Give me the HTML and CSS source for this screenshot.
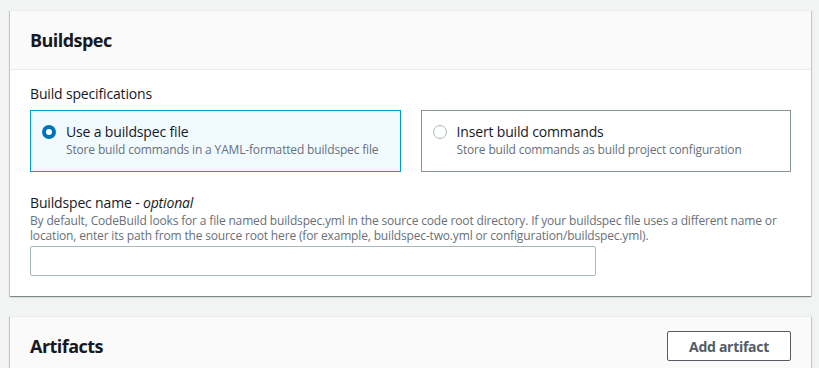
FILE: index.html
```html
<!DOCTYPE html>
<html>

	<head>
		<meta charset="UTF-8">
		<title>Buildspec</title>
		<link rel="stylesheet" href="styles.css">
	</head>

	<body>
		<div class="page">
			<div class="card">
				<div class="card-head">
					<h2>Buildspec</h2>
				</div>
				<div class="card-body">
					<div class="label">Build specifications</div>
					<div class="tiles">
						<label class="tile checked">
							<span class="radio"></span>
							<span class="tile-text">
								<span class="tile-title">Use a buildspec file</span>
								<span class="tile-desc">Store build commands in a YAML-formatted buildspec file</span>
							</span>
						</label>
						<label class="tile">
							<span class="radio"></span>
							<span class="tile-text">
								<span class="tile-title">Insert build commands</span>
								<span class="tile-desc">Store build commands as build project configuration</span>
							</span>
						</label>
					</div>
					<div class="field">
						<div class="label">Buildspec name - <i>optional</i></div>
						<div class="hint">By default, CodeBuild looks for a file named buildspec.yml in the source code root directory. If your buildspec file uses a different name or location, enter its path from the source root here (for example, buildspec-two.yml or configuration/buildspec.yml).</div>
						<input class="input" type="text">
					</div>
				</div>
			</div>

			<div class="card">
				<div class="card-head split">
					<h2>Artifacts</h2>
					<button class="btn">Add artifact</button>
				</div>
			</div>
		</div>
	</body>

</html>
```

FILE: styles.css
```css
body {
	margin: 0;
	background: #f2f3f3;
	font-family: "Open Sans", "Liberation Sans", sans-serif;
	letter-spacing: -0.01em;
	color: #16191f;
}

.page {
	padding: 10px 8px 0 10px;
	display: flex;
	flex-direction: column;
	gap: 20px;
}

.card {
	background: #fff;
	border-top: 1px solid #eaeded;
	box-shadow: 0 1px 1px 0 rgba(0, 28, 36, 0.3), 1px 1px 1px 0 rgba(0, 28, 36, 0.15), -1px 1px 1px 0 rgba(0, 28, 36, 0.15);
}

.card-head {
	background: #fafafa;
	border-bottom: 1px solid #eaeded;
	padding: 18px 20px;
}

.card-head h2 {
	margin: 0;
	font-size: 18px;
	line-height: 22px;
	font-weight: 700;
	letter-spacing: -0.03em;
}

.split {
	display: flex;
	justify-content: space-between;
	align-items: center;
	padding: 14px 20px;
}

.card-body {
	padding: 14px 20px 20px;
}

.label {
	font-size: 14px;
	line-height: 20px;
	margin-bottom: 6px;
}

.tiles {
	display: flex;
	gap: 20px;
}

.tile {
	flex: 1;
	display: flex;
	gap: 10px;
	border: 1px solid #879596;
	padding: 11px 10px 13px;
	cursor: pointer;
}

.tile.checked {
	border-color: #00a1c9;
	background: #f1faff;
}

.radio {
	width: 14px;
	height: 14px;
	box-sizing: border-box;
	border: 1px solid #aab7b8;
	border-radius: 50%;
	background: #fff;
	margin: 3px 0 0 1px;
	flex: none;
}

.checked .radio {
	border: 4px solid #0073bb;
}

.tile-text {
	display: flex;
	flex-direction: column;
}

.tile-title {
	font-size: 14px;
	line-height: 20px;
}

.tile-desc {
	font-size: 12px;
	line-height: 16px;
	color: #687078;
}

.field {
	margin-top: 20px;
}

.field .label {
	margin-bottom: 0;
	line-height: 21px;
}

.hint {
	font-size: 12px;
	line-height: 15px;
	color: #687078;
	margin-bottom: 3px;
}

.input {
	display: block;
	width: 566px;
	height: 30px;
	box-sizing: border-box;
	border: 1px solid #aab7b8;
	border-radius: 2px;
	margin: 0;
}

.btn {
	width: 124px;
	height: 30px;
	background: #fff;
	border: 1px solid #545b64;
	border-radius: 2px;
	color: #545b64;
	font-family: inherit;
	font-size: 14px;
	font-weight: 700;
	letter-spacing: -0.02em;
}
```
